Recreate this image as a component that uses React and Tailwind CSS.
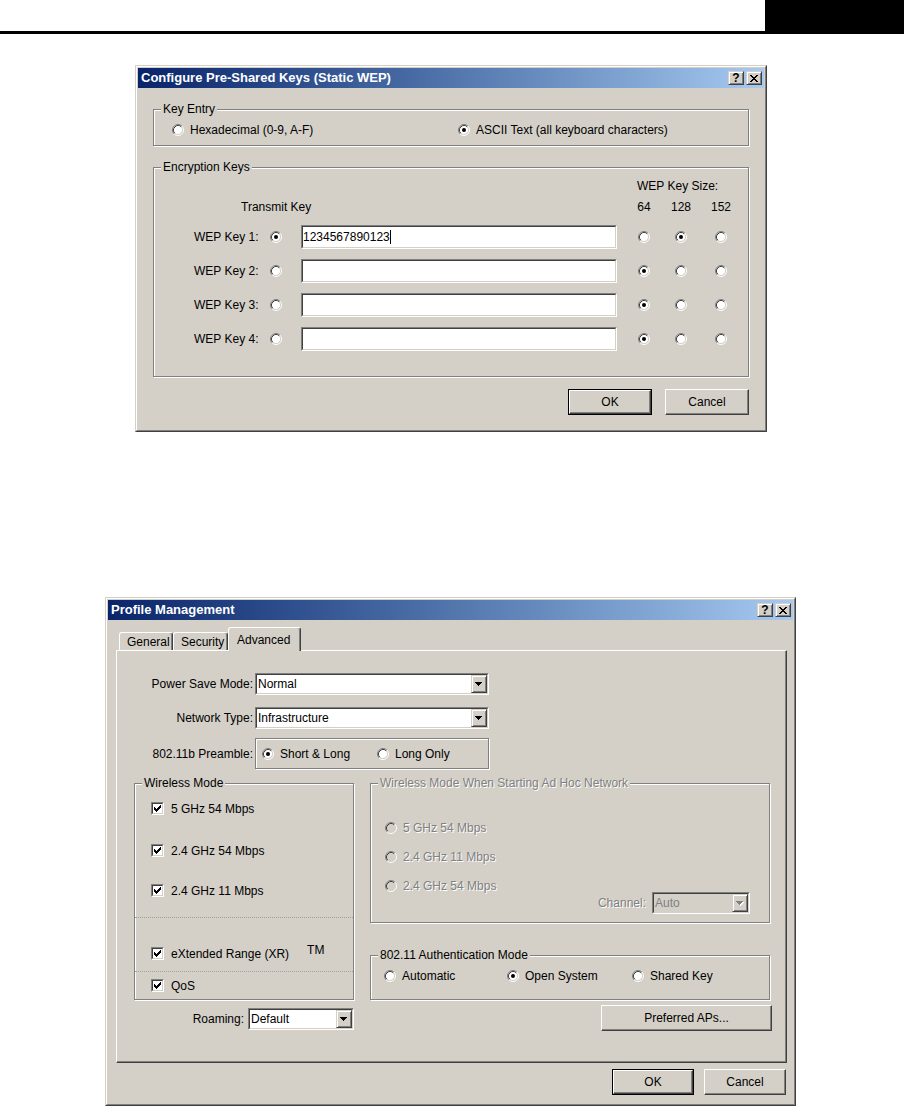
import React from 'react';

const FACE = 'bg-[#d4d0c8]';
const DIS = 'text-[#808080] [text-shadow:1px_1px_0_#fff]';

function Radio({ checked = false, disabled = false }) {
  return (
    <svg width="12" height="12" viewBox="0 0 12 12" className="shrink-0">
      <circle cx="6" cy="6" r="4.5" fill={disabled ? '#d4d0c8' : '#fff'} />
      <path d="M2.11 9.89 A5.5 5.5 0 0 1 9.89 2.11" fill="none" stroke="#808080" />
      <path d="M9.89 2.11 A5.5 5.5 0 0 1 2.11 9.89" fill="none" stroke="#fff" />
      <path d="M2.82 9.18 A4.5 4.5 0 0 1 9.18 2.82" fill="none" stroke="#404040" />
      <path d="M9.18 2.82 A4.5 4.5 0 0 1 2.82 9.18" fill="none" stroke="#d4d0c8" />
      {checked && <circle cx="6" cy="6" r="2" fill="#000" />}
    </svg>
  );
}

function Opt({ label, checked, disabled, className = '' }) {
  return (
    <div className={`flex h-[12px] items-center gap-[6px] ${className}`}>
      <Radio checked={checked} disabled={disabled} />
      <span className={`whitespace-nowrap leading-[14px] ${disabled ? DIS : ''}`}>{label}</span>
    </div>
  );
}

// classic 7x7 tick, one 3px column per x
const TICK = [2, 3, 4, 3, 2, 1, 0];

function CheckBox() {
  return (
    <span className="block h-[13px] w-[13px] shrink-0 border border-t-[#808080] border-l-[#808080] border-b-white border-r-white">
      <span className="block h-full w-full border border-t-[#404040] border-l-[#404040] border-b-[#d4d0c8] border-r-[#d4d0c8] bg-white">
        <svg width="9" height="9" viewBox="0 0 9 9" shapeRendering="crispEdges">
          {TICK.map((y, x) => (
            <rect key={x} x={x + 1} y={y + 1} width="1" height="3" fill="#000" />
          ))}
        </svg>
      </span>
    </span>
  );
}

function CheckRow({ children, className = '' }) {
  return (
    <div className={`flex h-[13px] items-center gap-[7px] pl-[16px] ${className}`}>
      <CheckBox />
      <span className="whitespace-nowrap leading-[14px]">{children}</span>
    </div>
  );
}

function Group({ label, disabled, className = '', children }) {
  return (
    <div className={`relative border border-[#808080] shadow-[inset_1px_1px_0_#fff,1px_1px_0_#fff] ${className}`}>
      {label && (
        <span className={`absolute -top-[8px] left-[7px] px-[2px] leading-[14px] whitespace-nowrap ${FACE} ${disabled ? DIS : ''}`}>
          {label}
        </span>
      )}
      {children}
    </div>
  );
}

function Sunken({ className = '', inner = 'bg-white', children }) {
  return (
    <div className={`flex border border-t-[#808080] border-l-[#808080] border-b-white border-r-white ${className}`}>
      <div className={`flex flex-1 items-center border border-t-[#404040] border-l-[#404040] border-b-[#d4d0c8] border-r-[#d4d0c8] ${inner}`}>
        {children}
      </div>
    </div>
  );
}

function DropButton({ disabled }) {
  return (
    <div className={`flex h-full w-[16px] items-center justify-center border border-t-[#d4d0c8] border-l-[#d4d0c8] border-b-[#404040] border-r-[#404040] shadow-[inset_1px_1px_0_#fff,inset_-1px_-1px_0_#808080] ${FACE}`}>
      <svg width="8" height="5" viewBox="0 0 8 5" shapeRendering="crispEdges">
        {disabled && <path d="M1 1h7v1h-1v1h-1v1h-1v1h-1v-1h-1v-1h-1v-1h-1z" fill="#fff" />}
        <path d="M0 0h7v1h-1v1h-1v1h-1v1h-1v-1h-1v-1h-1v-1h-1z" fill={disabled ? '#808080' : '#000'} />
      </svg>
    </div>
  );
}

function Combo({ value, disabled, className = '' }) {
  return (
    <Sunken className={className} inner={disabled ? FACE : 'bg-white'}>
      <span className={`flex-1 pl-[1px] leading-[14px] ${disabled ? 'text-[#808080]' : ''}`}>{value}</span>
      <DropButton disabled={disabled} />
    </Sunken>
  );
}

function Button({ children, def, className = '' }) {
  return (
    <div className={`${def ? 'border border-black' : ''} ${className}`}>
      <div className="flex h-full w-full items-center justify-center border border-t-white border-l-white border-b-[#404040] border-r-[#404040] shadow-[inset_-1px_-1px_0_#808080] leading-[14px]">
        {children}
      </div>
    </div>
  );
}

const XROWS = ['11000011', '01100110', '00111100', '00011000', '00111100', '01100110', '11000011'];

function CapButton({ children, className = '' }) {
  return (
    <div className={`flex h-[14px] w-[16px] items-center justify-center border border-t-[#d4d0c8] border-l-[#d4d0c8] border-b-[#404040] border-r-[#404040] shadow-[inset_1px_1px_0_#fff,inset_-1px_-1px_0_#808080] ${FACE} ${className}`}>
      {children}
    </div>
  );
}

function TitleBar({ title }) {
  return (
    <div className="flex h-[20px] items-center bg-linear-to-r from-[#0a246a] to-[#a6caf0] pl-[3px] pr-[2px]">
      <span className="flex-1 text-[13px] font-bold leading-[16px] text-white">{title}</span>
      <CapButton>
        <span className="text-[12px] font-bold leading-[12px] text-black">?</span>
      </CapButton>
      <CapButton className="ml-[2px]">
        <svg width="8" height="7" viewBox="0 0 8 7" shapeRendering="crispEdges">
          {XROWS.map((row, y) =>
            row.split('').map((c, x) => (c === '1' ? <rect key={`${x}-${y}`} x={x} y={y} width="1" height="1" fill="#000" /> : null))
          )}
        </svg>
      </CapButton>
    </div>
  );
}

function Window({ title, className = '', children }) {
  return (
    <div className={`border border-t-[#d4d0c8] border-l-[#d4d0c8] border-b-[#404040] border-r-[#404040] ${className}`}>
      <div className={`border border-t-white border-l-white border-b-[#808080] border-r-[#808080] p-px ${FACE}`}>
        <TitleBar title={title} />
        {children}
      </div>
    </div>
  );
}

function SizeCols({ cells }) {
  return (
    <div className="ml-auto flex">
      <div className="flex w-[30px] justify-center">{cells[0]}</div>
      <div className="ml-[7px] flex w-[30px] justify-center">{cells[1]}</div>
      <div className="ml-[10px] flex w-[30px] justify-center">{cells[2]}</div>
    </div>
  );
}

function KeyRow({ n, value, size }) {
  return (
    <div className="flex h-[24px] items-center">
      <span className="ml-[40px] w-[76px] leading-[14px]">WEP Key {n}:</span>
      <Radio checked={n === 1} />
      <Sunken className="ml-[19px] h-full w-[316px]">
        <span className="leading-[14px]">{value}</span>
        {value && <span className="h-[14px] w-px bg-black" />}
      </Sunken>
      <SizeCols cells={[64, 128, 152].map((s) => <Radio key={s} checked={s === size} />)} />
    </div>
  );
}

function FieldRow({ label, className = '', children }) {
  return (
    <div className={`flex items-center ${className}`}>
      <span className="w-[136px] text-right leading-[14px]">{label}</span>
      <div className="ml-[2px]">{children}</div>
    </div>
  );
}

function Tab({ children, selected, className = '' }) {
  return (
    <div
      className={`flex items-center rounded-t-[3px] border-t border-l border-r border-t-white border-l-white border-r-[#404040] shadow-[inset_-1px_0_0_#808080] leading-[14px] ${FACE} ${
        selected ? 'relative z-10 -mb-px h-[24px]' : 'h-[18px]'
      } ${className}`}
    >
      {children}
    </div>
  );
}

export default function App() {
  return (
    <div className="min-h-[1106px] w-[904px] bg-white font-['Liberation_Sans',Arial,sans-serif] text-[12px] text-black">
      <div className="flex h-[34px]">
        <div className="flex-1 border-b-[3px] border-black" />
        <div className="w-[139px] bg-black" />
      </div>

      <Window title="Configure Pre-Shared Keys (Static WEP)" className="ml-[135px] mt-[31px] w-[632px]">
        <div className="px-[15px] pt-[21px] pb-[14px]">
          <Group label="Key Entry" className="h-[37px]">
            <div className="flex pl-[18px] pt-[14px]">
              <Opt className="w-[286px]" label="Hexadecimal (0-9, A-F)" />
              <Opt checked label="ASCII Text (all keyboard characters)" />
            </div>
          </Group>

          <Group label="Encryption Keys" className="mt-[21px] h-[210px]">
            <div className="flex flex-col pt-[11px] pr-[12px]">
              <div className="flex h-[14px] items-center justify-end leading-[14px]">
                <span className="w-[107px] pl-[8px]">WEP Key Size:</span>
              </div>
              <div className="mt-[7px] flex h-[14px] items-center leading-[14px]">
                <span className="pl-[87px]">Transmit Key</span>
                <SizeCols cells={[<span key="a">64</span>, <span key="b">128</span>, <span key="c">152</span>]} />
              </div>
              <div className="mt-[11px] flex flex-col gap-[10px]">
                <KeyRow n={1} value="1234567890123" size={128} />
                <KeyRow n={2} value="" size={64} />
                <KeyRow n={3} value="" size={64} />
                <KeyRow n={4} value="" size={64} />
              </div>
            </div>
          </Group>

          <div className="mt-[12px] flex justify-end gap-[13px]">
            <Button def className="h-[26px] w-[84px]">OK</Button>
            <Button className="h-[26px] w-[84px]">Cancel</Button>
          </div>
        </div>
      </Window>

      <Window title="Profile Management" className="ml-[105px] mt-[165px] w-[691px]">
        <div className="pl-[8px] pr-[6px] pb-[8px]">
          <div className="flex h-[30px] items-end pl-[3px]">
            <Tab className="w-[54px] pl-[7px]">General</Tab>
            <Tab className="w-[55px] pl-[7px]">Security</Tab>
            <Tab selected className="w-[73px] pl-[8px]">Advanced</Tab>
          </div>

          <div className="h-[413px] border border-t-white border-l-white border-b-[#404040] border-r-[#404040] pt-[22px] shadow-[inset_-1px_-1px_0_#808080]">
            <FieldRow label="Power Save Mode:">
              <Combo value="Normal" className="h-[22px] w-[234px]" />
            </FieldRow>
            <FieldRow label="Network Type:" className="mt-[12px]">
              <Combo value="Infrastructure" className="h-[22px] w-[234px]" />
            </FieldRow>
            <FieldRow label="802.11b Preamble:" className="mt-[9px]">
              <Group className="flex h-[31px] w-[234px] items-center pl-[6px]">
                <Opt checked className="w-[115px]" label="Short & Long" />
                <Opt label="Long Only" />
              </Group>
            </FieldRow>

            <div className="mt-[14px] flex gap-[16px] pl-[17px]">
              <div className="flex w-[220px] flex-col">
                <Group label="Wireless Mode" className="flex h-[217px] flex-col">
                  <CheckRow className="mt-[18px]">5 GHz 54 Mbps</CheckRow>
                  <CheckRow className="mt-[29px]">2.4 GHz 54 Mbps</CheckRow>
                  <CheckRow className="mt-[27px]">2.4 GHz 11 Mbps</CheckRow>
                  <div className="mt-[20px] border-t border-dotted border-[#a0a0a0]" />
                  <CheckRow className="mt-[29px]">
                    eXtended Range (XR)
                    <span className="relative -top-[4px] ml-[18px]">TM</span>
                  </CheckRow>
                  <div className="mt-[11px] border-t border-dotted border-[#a0a0a0]" />
                  <CheckRow className="mt-[7px]">QoS</CheckRow>
                </Group>
                <div className="mt-[8px] flex items-center justify-end">
                  <span className="leading-[14px]">Roaming:</span>
                  <Combo value="Default" className="ml-[4px] h-[22px] w-[106px]" />
                </div>
              </div>

              <div className="flex w-[400px] flex-col">
                <Group label="Wireless Mode When Starting Ad Hoc Network" disabled className="h-[140px]">
                  <div className="flex flex-col pl-[14px] pt-[38px]">
                    <Opt disabled label="5 GHz 54 Mbps" />
                    <Opt disabled className="mt-[17px]" label="2.4 GHz 11 Mbps" />
                    <Opt disabled className="mt-[17px]" label="2.4 GHz 54 Mbps" />
                    <div className="flex items-center justify-end pr-[19px]">
                      <span className={`leading-[14px] ${DIS}`}>Channel:</span>
                      <Combo disabled value="Auto" className="ml-[6px] h-[22px] w-[98px]" />
                    </div>
                  </div>
                </Group>

                <Group label="802.11 Authentication Mode" className="mt-[32px] h-[45px]">
                  <div className="flex pl-[13px] pt-[14px]">
                    <Opt className="w-[123px]" label="Automatic" />
                    <Opt checked className="w-[125px]" label="Open System" />
                    <Opt label="Shared Key" />
                  </div>
                </Group>

                <Button className="-mr-[2px] mt-[5px] h-[26px] w-[171px] self-end">Preferred APs...</Button>
              </div>
            </div>
          </div>

          <div className="mt-[6px] flex justify-end gap-[10px] pr-[1px]">
            <Button def className="h-[26px] w-[82px]">OK</Button>
            <Button className="h-[26px] w-[82px]">Cancel</Button>
          </div>
        </div>
      </Window>
    </div>
  );
}
